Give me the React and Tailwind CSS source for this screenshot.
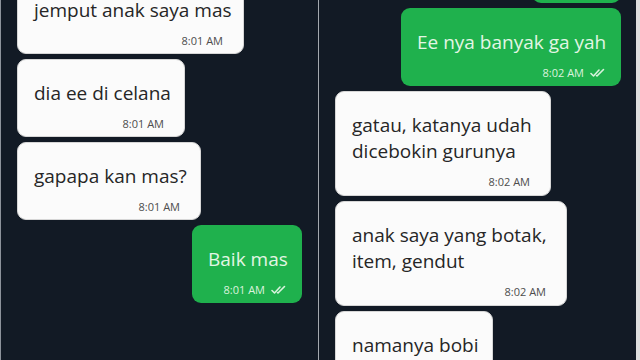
import React from 'react'

const font = { fontFamily: '"Open Sans", "Noto Sans", Arial, sans-serif' }

function Ticks() {
  return (
    <svg width="16" height="10" viewBox="0 0 16 10" fill="none" className="ml-[6px]">
      <path d="M1 5.5 L3.5 8 L9 2" stroke="#d8f2dc" strokeWidth="1.6" strokeLinecap="round" strokeLinejoin="round" />
      <path d="M6.5 7.5 L7 8 L13.5 1.5" stroke="#d8f2dc" strokeWidth="1.6" strokeLinecap="round" strokeLinejoin="round" />
    </svg>
  )
}

function Bubble({ lines, time, width, mine, className = '' }) {
  const pad = lines.length > 1 ? 'pb-[6px]' : 'pb-[5px]'
  return (
    <div
      className={`${width} ${className} shrink-0 rounded-[9px] pl-4 flex flex-col ${
        mine
          ? 'self-end bg-[#1fb14d] pr-[15px] pt-[21px] pb-[6px]'
          : `self-start bg-[#fbfbfb] pr-[20px] pt-[20px] ${pad} border border-[#d6d6d6]`
      }`}
    >
      {lines.map((l) => (
        <div key={l} className={`text-[19px] leading-[26px] whitespace-nowrap ${mine ? 'text-[#e3f6e4]' : 'text-[#262626]'}`}>
          {l}
        </div>
      ))}
      <div className={`mt-[11px] h-[14px] flex items-center justify-end text-[11px] leading-[14px] ${mine ? 'text-[#dcf3de]' : 'text-[#4d4d4d]'}`}>
        {time}
        {mine && <Ticks />}
      </div>
    </div>
  )
}

export default function App() {
  return (
    <div className="w-[640px] h-[360px] flex bg-[#d4d4d4] overflow-hidden" style={font}>
      <div className="w-px bg-[#8d939b]" />
      <div className="w-[317px] h-[360px] bg-[#121a25] overflow-hidden flex flex-col gap-[5px] px-4">
        <Bubble lines={['jemput anak saya mas']} time="8:01 AM" width="w-[227px]" className="-mt-[24px]" />
        <Bubble lines={['dia ee di celana']} time="8:01 AM" width="w-[168px]" />
        <Bubble lines={['gapapa kan mas?']} time="8:01 AM" width="w-[184px]" />
        <Bubble lines={['Baik mas']} time="8:01 AM" width="w-[110px]" mine />
      </div>
      <div className="w-px bg-[#a3a8ae]" />
      <div className="w-[317px] h-[360px] bg-[#121a25] overflow-hidden flex flex-col gap-[5px] pl-4 pr-[15px]">
        <div className="w-[89px] h-[78px] -mt-[75px] shrink-0 self-end rounded-[9px] bg-[#1fb14d]" />
        <Bubble lines={['Ee nya banyak ga yah']} time="8:02 AM" width="w-[220px]" mine />
        <Bubble lines={['gatau, katanya udah', 'dicebokin gurunya']} time="8:02 AM" width="w-[216px]" />
        <Bubble lines={['anak saya yang botak,', 'item, gendut']} time="8:02 AM" width="w-[232px]" />
        <Bubble lines={['namanya bobi']} time="8:02 AM" width="w-[158px]" />
      </div>
      <div className="w-[4px] bg-[#dedede]" />
    </div>
  )
}
